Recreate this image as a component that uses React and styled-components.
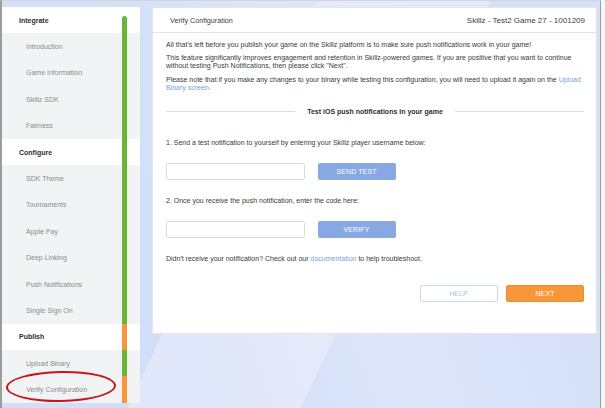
import React from "react";
import styled, { createGlobalStyle } from "styled-components";

const GlobalStyle = createGlobalStyle`
  body {
    margin: 0;
    background: #f6f6f6;
    font-family: "Liberation Sans", Arial, sans-serif;
  }
`;

const GREEN = "#6cb33e";
const ORANGE = "#f7973a";

const Frame = styled.div`
  width: 598px;
  height: 402px;
  border-top: 1px solid #d2d4d8;
  border-left: 2px solid #9c9c9c;
  border-right: 1px solid #9e9e9e;
  border-bottom: 1px solid #9a9a9a;
  display: flex;
  gap: 12px;
  padding-top: 6px;
  box-sizing: content-box;
  background:
    linear-gradient(115deg, rgba(255, 255, 255, 0) 40%, rgba(236, 238, 252, 0.6) 40%, rgba(236, 238, 252, 0.6) 62%, rgba(255, 255, 255, 0) 62%),
    linear-gradient(70deg, rgba(206, 221, 247, 0.7) 30%, rgba(226, 232, 250, 0.5) 55%, rgba(212, 224, 248, 0.6) 80%),
    #d9e3f9;
`;

const Sidebar = styled.nav`
  position: relative;
  width: 138px;
  flex-shrink: 0;
  display: flex;
  flex-direction: column;
  background: #fff;
  height: 396px;
`;

const Row = styled.div`
  height: 26.4px;
  display: flex;
  background: ${(p) => (p.$section ? "#fff" : "#f2f3f5")};
`;

const Label = styled.div`
  flex: 1;
  display: flex;
  align-items: center;
  padding-left: ${(p) => (p.$section ? "17px" : "24px")};
  font-size: 7px;
  font-weight: ${(p) => (p.$section ? 700 : 400)};
  color: ${(p) => (p.$section ? "#2f2f2f" : "#8b8b8b")};
`;

const Segment = styled.div`
  width: 5px;
  margin-right: 13px;
  margin-top: ${(p) => (p.$first ? "9px" : "0")};
  border-radius: ${(p) => (p.$first ? "3px 3px 0 0" : "0")};
  background: ${(p) => p.$color};
`;

const Circle = styled.div`
  position: absolute;
  left: 4px;
  top: 364px;
  width: 110px;
  height: 31px;
  border: 2px solid #c8161d;
  border-radius: 50%;
  box-sizing: border-box;
  transform: rotate(-1deg);
`;

const Main = styled.main`
  flex: 1;
  padding-right: 3px;
`;

const Card = styled.section`
  background: #fff;
  border: 1px solid #e4e6ea;
  border-radius: 2px;
  height: 325px;
`;

const CardHeader = styled.header`
  height: 24px;
  display: flex;
  align-items: center;
  justify-content: space-between;
  padding: 0 11px 0 17px;
  border-bottom: 1px solid #e3e3e3;
  font-size: 7.2px;
  color: #3c3c3c;
`;

const GameTitle = styled.span`
  font-size: 8px;
`;

const CardBody = styled.div`
  padding: 8px 12px 0 13px;
  font-size: 7px;
  line-height: 8px;
  color: #3a3a3a;
`;

const Para = styled.p`
  margin: 0 0 5.3px;
`;

const Link = styled.a`
  color: #7a9ee0;
  text-decoration: none;
`;

const Divider = styled.div`
  display: flex;
  align-items: center;
  gap: 12px;
  margin: 16px 0 23px;
  font-weight: 700;
  color: #2f2f2f;

  &::before,
  &::after {
    content: "";
    flex: 1;
    height: 1px;
    background: #dedede;
  }
`;

const Step = styled.p`
  margin: 0 0 16.5px;
`;

const FieldRow = styled.div`
  display: flex;
  gap: 12.5px;
  margin-bottom: 16.5px;
`;

const Input = styled.input`
  width: 139px;
  height: 17px;
  box-sizing: border-box;
  border: 1px solid #dcdcdc;
  border-radius: 2px;
  background: #fff;
`;

const Button = styled.button`
  width: 78px;
  height: ${(p) => (p.$tall ? "17.5px" : "17px")};
  box-sizing: border-box;
  border-radius: 2px;
  font-family: inherit;
  font-size: 7px;
  letter-spacing: 0.1px;
  padding: 0;
  border: 1px solid ${(p) => (p.$variant === "outline" ? "#c7d7f3" : p.$variant === "orange" ? "#f08b2b" : "#88a9e1")};
  background: ${(p) => (p.$variant === "outline" ? "#fff" : p.$variant === "orange" ? ORANGE : "#87a8e2")};
  color: ${(p) => (p.$variant === "outline" ? "#a7bfea" : "#fff")};
`;

const Actions = styled.div`
  display: flex;
  justify-content: flex-end;
  gap: 8.5px;
  margin-top: 22px;
`;

const nav = [
  { label: "Integrate", section: true, color: GREEN },
  { label: "Introduction", color: GREEN },
  { label: "Game Information", color: GREEN },
  { label: "Skillz SDK", color: GREEN },
  { label: "Fairness", color: GREEN },
  { label: "Configure", section: true, color: GREEN },
  { label: "SDK Theme", color: GREEN },
  { label: "Tournaments", color: GREEN },
  { label: "Apple Pay", color: GREEN },
  { label: "Deep Linking", color: GREEN },
  { label: "Push Notifications", color: GREEN },
  { label: "Single Sign On", color: GREEN },
  { label: "Publish", section: true, color: ORANGE },
  { label: "Upload Binary", color: GREEN },
  { label: "Verify Configuration", color: ORANGE },
];

export default function App() {
  return (
    <>
      <GlobalStyle />
      <Frame>
        <Sidebar>
          {nav.map((item, i) => (
            <Row key={item.label} $section={item.section}>
              <Label $section={item.section}>{item.label}</Label>
              <Segment $color={item.color} $first={i === 0} />
            </Row>
          ))}
          <Circle />
        </Sidebar>
        <Main>
          <Card>
            <CardHeader>
              <span>Verify Configuration</span>
              <GameTitle>Skillz - Test2 Game 27 - 1001209</GameTitle>
            </CardHeader>
            <CardBody>
              <Para>
                All that's left before you publish your game on the Skillz platform is to make sure push
                notifications work in your game!
              </Para>
              <Para>
                This feature significantly improves engagement and retention in Skillz-powered games. If you are
                positive that you want to continue without testing Push Notifications, then please click "Next".
              </Para>
              <Para>
                Please note that if you make any changes to your binary while testing this configuration, you will
                need to upload it again on the <Link href="#">Upload Binary screen.</Link>
              </Para>
              <Divider>Test iOS push notifications in your game</Divider>
              <Step>1. Send a test notification to yourself by entering your Skillz player username below:</Step>
              <FieldRow>
                <Input />
                <Button>SEND TEST</Button>
              </FieldRow>
              <Step>2. Once you receive the push notification, enter the code here:</Step>
              <FieldRow>
                <Input />
                <Button>VERIFY</Button>
              </FieldRow>
              <Step>
                Didn't receive your notification? Check out our <Link href="#">documentation</Link> to help
                troubleshoot.
              </Step>
              <Actions>
                <Button $variant="outline" $tall>HELP</Button>
                <Button $variant="orange" $tall>NEXT</Button>
              </Actions>
            </CardBody>
          </Card>
        </Main>
      </Frame>
    </>
  );
}
